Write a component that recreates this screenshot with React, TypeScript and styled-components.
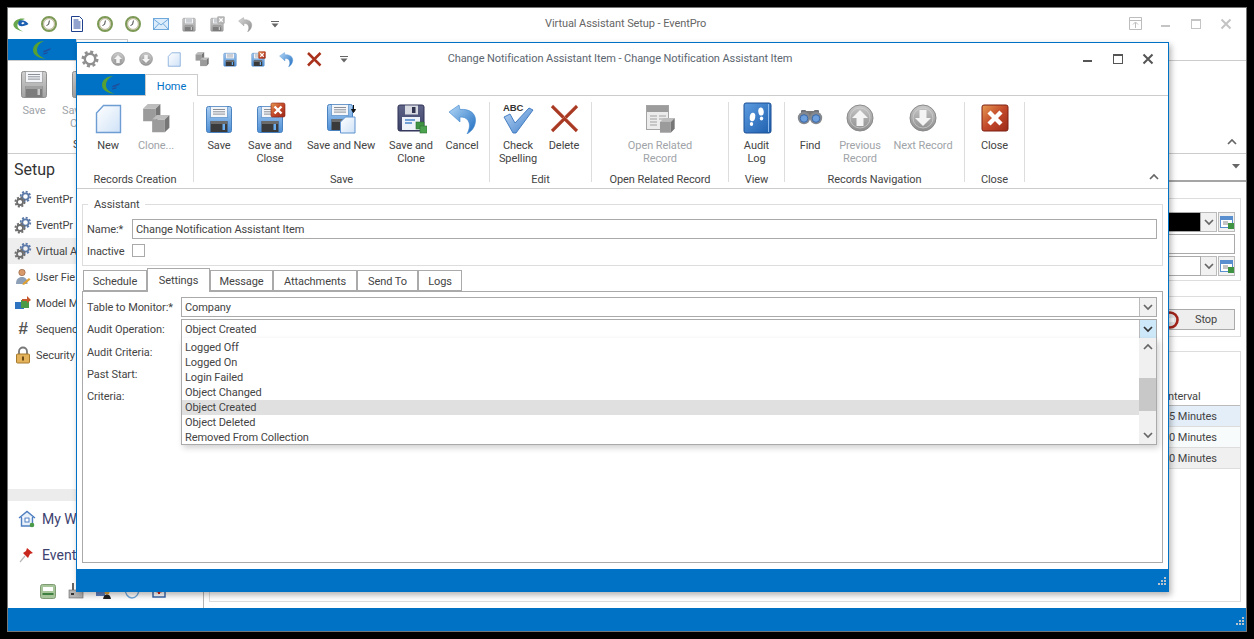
import React from 'react';
import styled, { createGlobalStyle } from 'styled-components';

const FONT = `Roboto, "Liberation Sans", sans-serif`;
const BLUE = '#0072c6';

const Global = createGlobalStyle`
  html, body { margin: 0; padding: 0; background: #000; height: 639px; overflow: hidden; }
  body { font-family: ${FONT}; font-size: 11px; letter-spacing: -0.08px; color: #444; }
  * { box-sizing: border-box; }
`;

/* ---------- icons ---------- */
const HiddenDefs = styled.svg`position: absolute; width: 0; height: 0;`;

const Defs = () => (
  <HiddenDefs aria-hidden="true">
    <defs>
      <linearGradient id="fBlue" x1="0" y1="0" x2="0" y2="1"><stop offset="0" stopColor="#a9cdf2" /><stop offset="1" stopColor="#4d8fd6" /></linearGradient>
      <linearGradient id="fGray" x1="0" y1="0" x2="0" y2="1"><stop offset="0" stopColor="#cfcfcf" /><stop offset="1" stopColor="#a2a2a2" /></linearGradient>
      <linearGradient id="fDark" x1="0" y1="0" x2="0" y2="1"><stop offset="0" stopColor="#5f6488" /><stop offset="1" stopColor="#3c4168" /></linearGradient>
      <linearGradient id="page" x1="0" y1="0" x2="1" y2="1"><stop offset="0" stopColor="#ffffff" /><stop offset="1" stopColor="#cfe2f7" /></linearGradient>
      <linearGradient id="undoB" x1="0" y1="0" x2="1" y2="1"><stop offset="0" stopColor="#b4d8f7" /><stop offset="1" stopColor="#1d6cc0" /></linearGradient>
      <linearGradient id="undoG" x1="0" y1="0" x2="1" y2="1"><stop offset="0" stopColor="#d8d8d8" /><stop offset="1" stopColor="#8c8c8c" /></linearGradient>
      <linearGradient id="ball" x1="0" y1="0" x2="0" y2="1"><stop offset="0" stopColor="#c8c8c8" /><stop offset="1" stopColor="#8d8d8d" /></linearGradient>
      <linearGradient id="book" x1="0" y1="0" x2="1" y2="1"><stop offset="0" stopColor="#5d9ce0" /><stop offset="1" stopColor="#1e5fae" /></linearGradient>
      <linearGradient id="redB" x1="0" y1="0" x2="1" y2="1"><stop offset="0" stopColor="#e79a52" /><stop offset="0.5" stopColor="#c2482a" /><stop offset="1" stopColor="#9c2a1a" /></linearGradient>
      <linearGradient id="check" x1="0" y1="0" x2="1" y2="1"><stop offset="0" stopColor="#bcd7f4" /><stop offset="1" stopColor="#3f7fcb" /></linearGradient>
    </defs>
  </HiddenDefs>
);

type IconProps = { size?: number };

const Svg: React.FC<IconProps & { children: React.ReactNode; box?: number }> = ({ size = 32, box = 32, children }) => (
  <svg width={size} height={size} viewBox={`0 0 ${box} ${box}`} aria-hidden="true">{children}</svg>
);

const FloppyBody = ({ tone }: { tone: 'blue' | 'gray' | 'dark' }) => {
  const fill = tone === 'blue' ? 'url(#fBlue)' : tone === 'gray' ? 'url(#fGray)' : 'url(#fDark)';
  const edge = tone === 'blue' ? '#4a82c0' : tone === 'gray' ? '#8f8f8f' : '#33375c';
  const slot = tone === 'blue' ? '#6aaef0' : '#c8c8c8';
  const shutter = tone === 'gray' ? '#7c7c7c' : '#3a3a3a';
  const shutterTop = tone === 'gray' ? '#a0a0a0' : '#6b6b6b';
  return (
    <>
      <rect x="3.5" y="4.5" width="25" height="26" rx="2" fill={fill} stroke={edge} />
      <rect x="7.5" y="4.5" width="17" height="11" fill="#f3f5f8" stroke={edge} strokeOpacity=".6" />
      <path d="M10 7.5h12M10 9.8h12M10 12.1h12" stroke="#8b8f96" />
      <rect x="7.5" y="19" width="17" height="11" fill={shutter} />
      <rect x="8" y="19" width="16" height="3" fill={shutterTop} />
      <rect x="19.5" y="22" width="2.5" height="6" fill={slot} />
    </>
  );
};

const Floppy = ({ size, tone = 'blue' }: IconProps & { tone?: 'blue' | 'gray' }) => (
  <Svg size={size}><FloppyBody tone={tone} /></Svg>
);

const FloppyClose = ({ size, tone = 'blue' }: IconProps & { tone?: 'blue' | 'gray' }) => (
  <Svg size={size}>
    <FloppyBody tone={tone} />
    <rect x="17" y="1" width="14" height="14" rx="1.5" fill={tone === 'blue' ? 'url(#redB)' : '#b5b5b5'} stroke={tone === 'blue' ? '#8a2416' : '#999'} strokeWidth=".6" />
    <path d="M20.5 4.5l7 7M27.5 4.5l-7 7" stroke="#fff" strokeWidth="2.4" />
  </Svg>
);

const FloppyNew = () => (
  <Svg>
    <g transform="translate(-1 -2)"><FloppyBody tone="blue" /></g>
    <path d="M20.5 15h9.500v16H15.500V20z" fill="url(#page)" stroke="#5f93cf" />
    <path d="M28.500 3v6M26.500 7.500l2 3 2-3z" stroke="#111" fill="#111" strokeWidth="1" />
  </Svg>
);

const Cube = ({ x, y, s = 1 }: { x: number; y: number; s?: number }) => (
  <g transform={`translate(${x} ${y}) scale(${s})`}>
    <path d="M5 0h11l-4 4H1z" fill="#bdbdbd" />
    <rect x="1" y="4" width="11" height="11" fill="#9b9b9b" />
    <path d="M12 4l4-4v11l-4 4z" fill="#767676" />
  </g>
);

const FloppyClone = () => (
  <Svg>
    <rect x="3" y="3" width="26" height="26" rx="2" fill="url(#fDark)" stroke="#2e3255" />
    <rect x="10" y="3.500" width="13" height="9" fill="#d8dbe2" />
    <rect x="17" y="5" width="3.500" height="6" fill="#30344f" />
    <rect x="7" y="15" width="18" height="13" fill="#eef3fa" />
    <path d="M10 18h10M10 21h7" stroke="#4a85c8" strokeWidth="1.400" />
    <rect x="21" y="20" width="8" height="7" fill="#3f9443" stroke="#2c6f30" strokeWidth=".6" />
    <rect x="25" y="24" width="7" height="7" fill="#4ca34f" stroke="#2c6f30" strokeWidth=".6" />
  </Svg>
);

const NewPage = ({ size }: IconProps) => (
  <Svg size={size}>
    <path d="M11.500 3.500h17v27h-24V11z" fill="url(#page)" stroke="#6e9dd4" strokeWidth="1.400" />
  </Svg>
);

const CloneCubes = ({ size }: IconProps) => (
  <Svg size={size}>
    <Cube x={2} y={2} s={1.15} />
    <Cube x={11} y={13} s={1.15} />
  </Svg>
);

const Undo = ({ size, tone = 'blue' }: IconProps & { tone?: 'blue' | 'gray' }) => (
  <Svg size={size}>
    <path
      d="M3 10 L13 3 L14 7.500 C23 6.500 30 11 29.500 19 C29 25 26 29 21 32 C23.500 27 24.500 22.500 22 18.500 C20 15.500 17.500 15 14 15 L14 20 Z"
      fill={tone === 'blue' ? 'url(#undoB)' : 'url(#undoG)'}
      stroke={tone === 'blue' ? '#3f86cc' : '#888'}
      strokeWidth=".6"
    />
  </Svg>
);

const RedCross = ({ size }: IconProps) => {
  const small = !!size && size < 20;
  return (
    <Svg size={size}>
      <path d="M4 4L29 29M29 4L4 29" stroke={small ? '#a8321c' : '#a83a24'} strokeWidth={small ? 5 : 3.2} />
      {!small && <path d="M5 3L29.500 27.500M28 3L3.500 27.500" stroke="#d9897a" strokeWidth=".6" />}
    </Svg>
  );
};

const AbcLabel = styled.text`
  font-family: "Liberation Sans", sans-serif;
  font-size: 9.5px;
  font-weight: 700;
  fill: #333;
`;

const CheckSpell = () => (
  <Svg>
    <AbcLabel x="1" y="9">ABC</AbcLabel>
    <path d="M2 15 L8 12 L13 21 L27 6 L31 8 L14 31 L11 31 Z" fill="url(#check)" stroke="#3a75bd" strokeWidth=".9" />
  </Svg>
);

const RelatedDoc = () => (
  <Svg>
    <rect x="2.500" y="3.500" width="22" height="24" fill="#ececec" stroke="#a5a5a5" />
    <rect x="3" y="4" width="21" height="6" fill="#9c9c9c" />
    <path d="M6 14h7M15 14h7M6 17h7M15 17h7M6 20h7M6 23h7" stroke="#a0a0a0" />
    <Cube x={15} y={16} s={.98} />
  </Svg>
);

const AuditBook = () => (
  <Svg>
    <rect x="3" y="1" width="27" height="30" rx="2" fill="url(#book)" stroke="#1a4f96" />
    <path d="M27.500 2v28" stroke="#8fbcec" />
    <ellipse cx="11.500" cy="15" rx="2.700" ry="4.200" fill="#fff" transform="rotate(10 11.500 15)" />
    <ellipse cx="10.500" cy="22" rx="1.700" ry="2" fill="#fff" />
    <ellipse cx="20" cy="9.500" rx="2.700" ry="4" fill="#fff" transform="rotate(-8 20 9.500)" />
    <ellipse cx="20.500" cy="16.500" rx="1.700" ry="2" fill="#fff" />
  </Svg>
);

const Binoculars = () => (
  <Svg>
    <rect x="11" y="9" width="10" height="5" fill="#777" />
    <rect x="7" y="8" width="5" height="4" rx="1" fill="#6f7379" />
    <rect x="20" y="8" width="5" height="4" rx="1" fill="#6f7379" />
    <circle cx="10" cy="16" r="6.200" fill="#84888f" />
    <circle cx="22" cy="16" r="6.200" fill="#84888f" />
    <circle cx="10" cy="16.500" r="3.800" fill="#6d9fdc" stroke="#3a69ab" />
    <circle cx="22" cy="16.500" r="3.800" fill="#6d9fdc" stroke="#3a69ab" />
  </Svg>
);

const ArrowBall = ({ size, down }: IconProps & { down?: boolean }) => (
  <Svg size={size}>
    <circle cx="16" cy="16" r="13" fill="url(#ball)" stroke="#8a8a8a" />
    <circle cx="16" cy="16" r="10" fill="none" stroke="#d9d9d9" strokeOpacity=".6" />
    <path
      d={down ? 'M16 24L8 16h4.500V8h7v8H24z' : 'M16 8L24 16h-4.500v8h-7v-8H8z'}
      fill="#f4f4f4"
    />
  </Svg>
);

const CloseBox = () => (
  <Svg>
    <rect x="3" y="3" width="26" height="26" rx="2" fill="url(#redB)" stroke="#7d2012" />
    <path d="M10 10l12 12M22 10L10 22" stroke="#fff" strokeWidth="4.400" />
  </Svg>
);

const ClockIcon = () => (
  <Svg size={16} box={16}>
    <circle cx="8" cy="8" r="7" fill="#f5f5f0" stroke="#7c9a55" strokeWidth="2" />
    <circle cx="8" cy="8" r="5.400" fill="#fff" stroke="#a8a078" strokeWidth=".8" />
    <path d="M8.400 4.500L7.600 8.400L5.500 9.500" stroke="#444" fill="none" />
  </Svg>
);

const DocIcon = () => (
  <Svg size={16} box={16}>
    <path d="M2.500 .5h8l3 3v12h-11z" fill="#fff" stroke="#1f3f8c" />
    <path d="M4.500 4h5M4.500 6h7M4.500 8h7M4.500 10h7M4.500 12h7" stroke="#274b9e" />
  </Svg>
);

const MailIcon = () => (
  <Svg size={16} box={16}>
    <rect x=".5" y="2.500" width="15" height="11" fill="#dcecfb" stroke="#6fa8dc" />
    <path d="M.5 3L8 9l7.500-6M.5 13.500L6 7.500M15.500 13.500L10 7.500" stroke="#6fa8dc" fill="none" />
  </Svg>
);

const LogoBlue = () => (
  <Svg size={16} box={16}>
    <path d="M12 3C7 1.500 1.500 4 .5 8c-.7 3 3 6 9.500 7.500-4-2-6-4-5.500-7C5 6 8 4 12 3z" fill="#6aa84f" />
    <path d="M15.500 8c-2-3-6-4.500-9-3.400C5 5.500 4.500 8 6 9.500c2 1.300 6.500.6 9.500-1.500zM9 6.500c1-.5 2-.3 2.500.5-.5 1-2 1.500-2.500 1-.7-.5-.7-1 0-1.500z" fill="#1c5fb0" fillRule="evenodd" />
  </Svg>
);

const TabLogo = () => (
  <Svg size={22} box={22}>
    <path d="M13 2C7 2 2 6 2 11c0 5 5 8 13 9-6-2-9-5-9-8.500C6 7 9 3.500 13 2z" fill="#57a033" />
    <path d="M12 12l8-3-1 2-6 2.500zM12 14.500l5-1.500-1 1.800-4 .7z" fill="#1f4f9c" />
  </Svg>
);

const GearQat = () => (
  <Svg size={18} box={18}>
    <circle cx="9" cy="9" r="5.200" fill="none" stroke="#8f8f8f" strokeWidth="2.400" />
    <circle cx="9" cy="9" r="7.200" fill="none" stroke="#8f8f8f" strokeWidth="2.600" strokeDasharray="3 2.650" />
  </Svg>
);

const QatDrop = () => (
  <Svg size={10} box={10}>
    <path d="M1 2.500h8" stroke="#666" />
    <path d="M1.500 4.500h7L5 8.500z" fill="#666" />
  </Svg>
);

const GearsSide = () => (
  <Svg size={18} box={18}>
    <circle cx="11.500" cy="6.500" r="3.200" fill="none" stroke="#5a78a8" strokeWidth="1.800" />
    <circle cx="11.500" cy="6.500" r="4.800" fill="none" stroke="#5a78a8" strokeWidth="1.800" strokeDasharray="2 1.700" />
    <circle cx="6" cy="12" r="3" fill="none" stroke="#6d6d6d" strokeWidth="1.800" />
    <circle cx="6" cy="12" r="4.600" fill="none" stroke="#6d6d6d" strokeWidth="1.800" strokeDasharray="2 1.600" />
  </Svg>
);

const UserIcon = () => (
  <Svg size={18} box={18}>
    <circle cx="8" cy="4.500" r="3.200" fill="#d89a6a" stroke="#8a5a3a" strokeWidth=".6" />
    <path d="M2 16c0-5 2.500-7 6-7s5.500 2 5.500 7z" fill="#8ea0b8" />
    <path d="M9 15l6-5 1.500 1.500-6 5-2 .5z" fill="#e0a030" />
  </Svg>
);

const ModelIcon = () => (
  <Svg size={18} box={18}>
    <rect x="1" y="8" width="9" height="7" fill="#2f74c0" />
    <rect x="7" y="6" width="8" height="8" fill="#4a9a48" />
    <path d="M8 5h5V2l4 4-4 3V7H8z" fill="#c65a2e" />
  </Svg>
);

const LockIcon = () => (
  <Svg size={18} box={18}>
    <path d="M5 8V5.500a4 4 0 0 1 8 0V8" fill="none" stroke="#777" strokeWidth="1.800" />
    <rect x="2.500" y="8" width="13" height="9" rx="1" fill="#e3b25a" stroke="#a67a2c" />
    <rect x="8" y="10.500" width="2" height="4" fill="#6b4a16" />
  </Svg>
);

const HouseIcon = () => (
  <Svg size={18} box={18}>
    <path d="M1 8L9 1.500 17 8M3.500 7v9h11V7" fill="#e8f0fa" stroke="#4f7fc0" strokeWidth="1.400" />
    <rect x="7" y="8" width="4" height="4" fill="#fff" stroke="#4f7fc0" />
    <circle cx="14" cy="15" r="2.300" fill="#4a9a48" />
  </Svg>
);

const PinIcon = () => (
  <Svg size={18} box={18}>
    <path d="M2 16l5-6" stroke="#b9b9b9" strokeWidth="1.200" />
    <path d="M9 2l6 5-3 1-2 4-5-5 3-2z" fill="#c8281e" />
  </Svg>
);

const BedIcon = () => (
  <Svg size={16} box={16}>
    <rect x=".5" y="1.500" width="15" height="14" rx="2" fill="#a7c59a" stroke="#7f9b72" />
    <rect x="3" y="4" width="10" height="4" fill="#fff" />
    <rect x="2.500" y="10" width="11" height="2" fill="#3f7f3f" />
  </Svg>
);

const FactoryIcon = () => (
  <Svg size={16} box={16}>
    <rect x="4" y="0" width="2" height="7" fill="#666" />
    <rect x="1" y="7" width="14" height="8" fill="#b5b5b5" stroke="#666" strokeWidth=".6" />
    <rect x="3" y="10" width="3" height="2" fill="#333" />
  </Svg>
);

const PersonChart = () => (
  <Svg size={16} box={16}>
    <rect x="0" y="6" width="9" height="7" fill="#5a7fc0" />
    <circle cx="11" cy="9" r="2.500" fill="#e0a840" />
    <path d="M7 17c0-4 2-5.500 4-5.500s4 1.500 4 5.500z" fill="#222" />
  </Svg>
);

const ChatIcon = () => (
  <Svg size={16} box={16}>
    <path d="M1 5C1 1 15 1 15 6c0 5-3 9-7 9-4 0-7-4-7-10z" fill="#fff" stroke="#6fa8dc" strokeWidth="1.300" />
  </Svg>
);

const CalIcon = () => (
  <Svg size={16} box={16}>
    <rect x="1" y="1" width="12" height="13" fill="#fff" stroke="#2f5fa8" strokeWidth="1.400" />
    <path d="M7 6v5M4.500 8.500h5" stroke="#c8281e" strokeWidth="2" />
  </Svg>
);

const TableGreen = () => (
  <Svg size={14} box={14}>
    <rect x=".5" y="1.500" width="12" height="11" fill="#fff" stroke="#5a8fcf" />
    <rect x="1" y="2" width="11" height="3" fill="#5a8fcf" />
    <path d="M3 7h5M3 9h5" stroke="#8a8a8a" />
    <rect x="8" y="8" width="6" height="6" fill="#3f9443" />
  </Svg>
);

const StopIcon = () => (
  <Svg size={18} box={18}>
    <circle cx="9" cy="9" r="7.500" fill="#e8e8e8" stroke="#a3241a" strokeWidth="2.600" />
    <rect x="5" y="7" width="8" height="4" fill="#fff" />
  </Svg>
);

const Chevron = ({ up, color = '#666' }: { up?: boolean; color?: string }) => (
  <Svg size={10} box={10}>
    <path d={up ? 'M1 7l4-4 4 4' : 'M1 3l4 4 4-4'} fill="none" stroke={color} strokeWidth="1.700" />
  </Svg>
);

const TriDown = () => (
  <Svg size={10} box={10}>
    <path d="M1 3h8L5 7.500z" fill="#666" />
  </Svg>
);

const Grip = () => (
  <Svg size={12} box={12}>
    <path d="M8 0h2v2H8zM5 3h2v2H5zM8 3h2v2H8zM2 6h2v2H2zM5 6h2v2H5zM8 6h2v2H8z" fill="#b9c4cc" />
  </Svg>
);

const BgRestoreIcon = () => (
  <Svg size={14} box={14}>
    <path d="M.5 .5h12v12H.5zM.5 3.500h12M6.500 11V5.500M4 7.500l2.500-2.500L9 7.500" fill="none" stroke="#bdbdbd" />
  </Svg>
);

const WinMin = ({ color }: { color: string }) => (
  <Svg size={12} box={12}><rect x="1" y="7" width="9" height="2" fill={color} /></Svg>
);
const WinMax = ({ color }: { color: string }) => (
  <Svg size={12} box={12}>
    <rect x="1.500" y="1.500" width="9" height="9" fill="none" stroke={color} />
    <rect x="1" y="1" width="10" height="2" fill={color} />
  </Svg>
);
const WinClose = ({ color }: { color: string }) => (
  <Svg size={12} box={12}><path d="M1.500 1.500l9 9M10.500 1.500l-9 9" stroke={color} strokeWidth="2" /></Svg>
);

/* ---------- page shell ---------- */
const Page = styled.div`
  width: 1254px;
  height: 639px;
  padding: 7px;
  background: #000;
`;

const AppWindow = styled.div`
  position: relative;
  width: 1240px;
  height: 625px;
  border: 1px solid #777;
  background: #fff;
  display: flex;
  flex-direction: column;
  overflow: hidden;
`;

const TitleBar = styled.div`
  height: 31px;
  display: flex;
  align-items: center;
  padding: 0 5px 0 0;
  flex: none;
`;

const Qat = styled.div<{ $width: number }>`
  width: ${p => p.$width}px;
  margin-left: -1px;
  display: flex;
  align-items: center;
  flex: none;
`;

const QatSlot = styled.span`
  width: 28px;
  height: 24px;
  flex: none;
  display: flex;
  align-items: center;
  justify-content: center;
`;

const QatSmall = styled(QatSlot)`
  margin-left: 2px;
`;

const AppTitle = styled.div`
  margin-left: 260px;
  color: #666;
  white-space: nowrap;
`;

const WinControls = styled.div`
  margin-left: auto;
  display: flex;
  align-items: center;
`;

const WinButton = styled.span`
  width: 30px;
  height: 24px;
  display: flex;
  align-items: center;
  justify-content: center;
`;

const AppTabs = styled.div`
  height: 22px;
  flex: none;
  display: flex;
  border-bottom: 1px solid #ccc;
`;

const BlueTab = styled.div<{ $width: number }>`
  width: ${p => p.$width}px;
  height: 100%;
  background: ${BLUE};
  display: flex;
  align-items: center;
  justify-content: center;
  flex: none;
`;

const OutlineTab = styled.div`
  width: 52px;
  border: 1px solid #ccc;
  border-bottom: 0;
`;

const AppRibbon = styled.div`
  position: relative;
  height: 93px;
  flex: none;
  display: flex;
  border-bottom: 1px solid #ccc;
  padding-top: 6px;
`;

const RibbonCollapse = styled.span<{ $right: number; $bottom: number }>`
  position: absolute;
  right: ${p => p.$right}px;
  bottom: ${p => p.$bottom}px;
  line-height: 0;
`;

const AppBody = styled.div`
  flex: 1;
  min-height: 0;
  display: flex;
`;

const Sidebar = styled.aside`
  width: 196px;
  flex: none;
  border-right: 1px solid #b5b5b5;
  display: flex;
  flex-direction: column;
`;

const SideTitle = styled.div`
  height: 32px;
  padding: 6px 0 0 6px;
  font-size: 16px;
  letter-spacing: 0;
  line-height: 20px;
  color: #333;
`;

const SideList = styled.div`
  display: flex;
  flex-direction: column;
`;

const SideRow = styled.div<{ $active?: boolean }>`
  height: 26px;
  display: flex;
  align-items: center;
  gap: 4px;
  padding-left: 6px;
  color: #444;
  white-space: nowrap;
  background: ${p => (p.$active ? '#eee' : 'transparent')};
`;

const HashGlyph = styled.span`
  width: 18px;
  text-align: center;
  font-size: 17px;
  font-weight: 700;
  font-style: italic;
  color: #555;
  font-family: "Liberation Sans", sans-serif;
`;

const SideBand = styled.div`
  height: 12px;
  margin-top: auto;
  background: #ececec;
`;

const NavRow = styled.div`
  height: 36px;
  display: flex;
  align-items: center;
  gap: 6px;
  padding-left: 10px;
  font-size: 14px;
  letter-spacing: 0;
  color: #3d4270;
  white-space: nowrap;
`;

const NavIcons = styled.div`
  height: 35px;
  padding: 10px 0 0 32px;
  display: flex;
  gap: 12px;
  align-items: flex-start;
`;

const Main = styled.main`
  flex: 1;
  min-width: 0;
  display: flex;
  flex-direction: column;
`;

const MainStrip = styled.div`
  height: 28px;
  flex: none;
  border-bottom: 2px solid #a5a5a5;
  display: flex;
  justify-content: flex-end;
  padding: 7px 5px 0 0;
`;

const MainPanels = styled.div`
  flex: 1;
  display: flex;
  flex-direction: column;
  padding: 16px 5px 6px;
`;

const PanelBox = styled.section<{ $height?: number; $gap?: number }>`
  border: 1px solid #ddd;
  flex: ${p => (p.$height ? `0 0 ${p.$height}px` : '1')};
  margin-top: ${p => p.$gap ?? 0}px;
  display: flex;
  flex-direction: column;
`;

const FieldStack = styled.div`
  margin: 13px 5px 0 auto;
  width: 320px;
  display: flex;
  flex-direction: column;
  gap: 2px;
`;

const BgFieldRow = styled.div`
  height: 20px;
  display: flex;
`;

const BgField = styled.div<{ $black?: boolean }>`
  flex: 1;
  border: 1px solid #aaa;
  background: ${p => (p.$black ? '#000' : '#fff')};
`;

const BgChevronButton = styled.div`
  width: 16px;
  border: 1px solid #bbb;
  border-left: 0;
  background: #f1f1f1;
  display: flex;
  align-items: center;
  justify-content: center;
`;

const BgIconButton = styled(BgChevronButton)`
  width: 17px;
  border-left: 1px solid #bbb;
  margin-left: 1px;
`;

const StopButton = styled.div`
  margin: 12px 5px 0 auto;
  width: 92px;
  height: 21px;
  border: 1px solid #aaa;
  background: #eee;
  display: flex;
  align-items: center;
  gap: 16px;
  padding-left: 17px;
  color: #444;
`;

const GridHead = styled.div`
  margin-top: 37px;
  height: 17px;
  border-bottom: 1px solid #bbb;
  padding-left: 955px;
  line-height: 16px;
  color: #444;
`;

const GridRow = styled.div<{ $bg: string }>`
  height: 21px;
  background: ${p => p.$bg};
  border-bottom: 1px solid #ddd;
  padding-left: 953px;
  line-height: 22px;
  color: #444;
`;

const StatusBar = styled.div<{ $height: number }>`
  height: ${p => p.$height}px;
  flex: none;
  background: ${BLUE};
  display: flex;
  align-items: flex-end;
  justify-content: flex-end;
  padding: 0 0 2px 0;
`;

/* ---------- dialog ---------- */
const Dialog = styled.div`
  position: absolute;
  left: 68px;
  top: 34px;
  width: 1093px;
  height: 550px;
  background: #fff;
  border: 1px solid ${BLUE};
  border-top-width: 1.5px;
  box-shadow: 2px 3px 6px rgba(0, 0, 0, .3);
  display: flex;
  flex-direction: column;
`;

const DialogBar = styled.div`
  height: 31px;
  flex: none;
  display: grid;
  grid-template-columns: 1fr auto 1fr;
  align-items: center;
  padding-right: 5px;
`;

const DialogTitle = styled.div`
  color: #5c6670;
  white-space: nowrap;
`;

const DialogTabs = styled.div`
  height: 22px;
  flex: none;
  display: flex;
  border-bottom: 1px solid #ccc;
`;

const HomeTab = styled.div`
  width: 53px;
  height: 22px;
  flex: none;
  border: 1px solid #ccc;
  border-bottom: 0;
  background: #fff;
  color: ${BLUE};
  display: flex;
  align-items: center;
  justify-content: center;
  padding-top: 2px;
`;

const Ribbon = styled.div`
  position: relative;
  height: 93px;
  flex: none;
  display: flex;
  padding-top: 6px;
  border-bottom: 1px solid #ccc;
`;

const RibbonGroup = styled.div<{ $width: number; $plain?: boolean }>`
  width: ${p => p.$width}px;
  height: 80px;
  flex: none;
  border-right: ${p => (p.$plain ? '0' : '1px solid #ddd')};
  display: flex;
  flex-direction: column;
`;

const GroupButtons = styled.div<{ $pad: number }>`
  height: 71px;
  flex: none;
  display: flex;
  padding-left: ${p => p.$pad}px;
`;

const GroupLabel = styled.div<{ $indent?: number }>`
  height: 14px;
  line-height: 14px;
  flex: none;
  text-align: ${p => (p.$indent ? 'left' : 'center')};
  padding-left: ${p => p.$indent ?? 0}px;
  color: #444;
  white-space: nowrap;
`;

const RibbonButton = styled.div<{ $width: number; $off?: boolean }>`
  width: ${p => p.$width}px;
  flex: none;
  display: flex;
  flex-direction: column;
  align-items: center;
  color: ${p => (p.$off ? '#a0a4a8' : '#444')};
`;

const RibbonIcon = styled.span`
  height: 32px;
  margin-bottom: 5px;
  line-height: 0;
`;

const RibbonText = styled.span`
  line-height: 13px;
  text-align: center;
  white-space: pre-line;
`;

const CoveredText = styled.span`
  align-self: flex-start;
  padding-left: 7px;
  line-height: 13px;
  white-space: pre;
`;

const DialogBody = styled.div`
  flex: 1;
  min-height: 0;
  padding: 8px 5px 6px;
  display: flex;
  flex-direction: column;
`;

const GroupBox = styled.fieldset`
  margin: 0;
  padding: 8px 5px 8px 4px;
  border: 1px solid #ddd;
  height: 69px;
  flex: none;
  min-width: 0;
`;

const GroupLegend = styled.legend`
  margin-left: 1px;
  padding: 0 6px;
  line-height: 16px;
  height: 14px;
  color: #444;
`;

const NameRow = styled.div`
  height: 20px;
  display: flex;
  align-items: center;
`;

const NameLabel = styled.label`
  width: 45px;
  flex: none;
`;

const TextInput = styled.input`
  flex: 1;
  height: 20px;
  min-width: 0;
  border: 1px solid #aaa;
  padding: 0 3px;
  font: 11px ${FONT};
  letter-spacing: -0.08px;
  color: #444;
  outline: none;
`;

const InactiveRow = styled.div`
  height: 13px;
  margin-top: 5px;
  display: flex;
  align-items: center;
`;

const InactiveLabel = styled(NameLabel)`
  padding-top: 1px;
`;

const CheckBox = styled.span`
  width: 13px;
  height: 13px;
  border: 1px solid #aaa;
  flex: none;
`;

const TabRow = styled.div`
  margin-top: 2px;
  padding-left: 1px;
  height: 23px;
  flex: none;
  display: flex;
  align-items: flex-end;
`;

const Tab = styled.div<{ $width: number; $active?: boolean }>`
  position: relative;
  width: ${p => p.$width}px;
  height: ${p => (p.$active ? 24 : 21)}px;
  margin-bottom: ${p => (p.$active ? -1 : 0)}px;
  border: 1px solid #aaa;
  border-bottom: ${p => (p.$active ? '0' : '1px solid #aaa')};
  background: #fff;
  z-index: ${p => (p.$active ? 1 : 0)};
  display: flex;
  align-items: center;
  justify-content: center;
  flex: none;
  color: #444;
  padding-top: ${p => (p.$active ? 0 : 2)}px;
`;

const TabPanel = styled.div`
  position: relative;
  flex: 1;
  min-height: 0;
  border: 1px solid #aaa;
  padding: 5px 5px 0 4px;
`;

const FormRow = styled.div`
  height: 20px;
  margin-bottom: 2px;
  display: flex;
  align-items: center;
`;

const FormLabel = styled.div`
  width: 94px;
  flex: none;
  white-space: nowrap;
`;

const LabelRow = styled.div`
  height: 22px;
  display: flex;
  align-items: center;
`;

const Combo = styled.div`
  flex: 1;
  height: 20px;
  border: 1px solid #aaa;
  display: flex;
  align-items: center;
  min-width: 0;
`;

const ComboText = styled.div`
  flex: 1;
  padding-left: 3px;
  color: #444;
`;

const ComboButton = styled.div<{ $open?: boolean }>`
  width: 17px;
  height: 100%;
  border-left: 1px solid #bbb;
  background: ${p => (p.$open ? '#cde8f8' : '#f1f1f1')};
  display: flex;
  align-items: center;
  justify-content: center;
`;

const DropList = styled.div`
  position: absolute;
  left: 98px;
  top: 46px;
  width: 976px;
  height: 107px;
  background: #fff;
  border: 1px solid #aaa;
  border-top: 0;
  box-shadow: 2px 3px 6px rgba(0, 0, 0, .18);
  display: flex;
  z-index: 2;
`;

const DropItems = styled.div`
  flex: 1;
  padding-top: 2px;
  display: flex;
  flex-direction: column;
`;

const DropItem = styled.div<{ $selected?: boolean }>`
  height: 15px;
  line-height: 15px;
  padding-left: 3px;
  color: #444;
  background: ${p => (p.$selected ? '#e0e0e0' : 'transparent')};
`;

const ScrollBar = styled.div`
  width: 17px;
  flex: none;
  background: #f0f0f0;
  display: flex;
  flex-direction: column;
  align-items: center;
`;

const ScrollButton = styled.span`
  height: 18px;
  display: flex;
  align-items: center;
`;

const ScrollThumb = styled.div`
  width: 100%;
  height: 33px;
  margin: 22px 0 auto;
  background: #c8c8c8;
`;

/* ---------- data ---------- */
type Btn = { w: number; label: string; icon: React.ReactNode; off?: boolean };
type Grp = { w: number; pad: number; label: string; buttons: Btn[] };

const groups: Grp[] = [
  { w: 117, pad: 8, label: 'Records Creation', buttons: [
    { w: 46, label: 'New', icon: <NewPage /> },
    { w: 50, label: 'Clone...', icon: <CloneCubes />, off: true },
  ] },
  { w: 296, pad: 4, label: 'Save', buttons: [
    { w: 42, label: 'Save', icon: <Floppy /> },
    { w: 60, label: 'Save and\nClose', icon: <FloppyClose /> },
    { w: 82, label: 'Save and New', icon: <FloppyNew /> },
    { w: 58, label: 'Save and\nClone', icon: <FloppyClone /> },
    { w: 44, label: 'Cancel', icon: <Undo /> },
  ] },
  { w: 102, pad: 5, label: 'Edit', buttons: [
    { w: 46, label: 'Check\nSpelling', icon: <CheckSpell /> },
    { w: 46, label: 'Delete', icon: <RedCross /> },
  ] },
  { w: 137, pad: 0, label: 'Open Related Record', buttons: [
    { w: 136, label: 'Open Related\nRecord', icon: <RelatedDoc />, off: true },
  ] },
  { w: 56, pad: 0, label: 'View', buttons: [
    { w: 55, label: 'Audit\nLog', icon: <AuditBook /> },
  ] },
  { w: 180, pad: 5, label: 'Records Navigation', buttons: [
    { w: 40, label: 'Find', icon: <Binoculars /> },
    { w: 60, label: 'Previous\nRecord', icon: <ArrowBall />, off: true },
    { w: 66, label: 'Next Record', icon: <ArrowBall down />, off: true },
  ] },
  { w: 60, pad: 0, label: 'Close', buttons: [
    { w: 59, label: 'Close', icon: <CloseBox /> },
  ] },
];

const sideRows = [
  { icon: <GearsSide />, label: 'EventPr' },
  { icon: <GearsSide />, label: 'EventPr' },
  { icon: <GearsSide />, label: 'Virtual A', active: true },
  { icon: <UserIcon />, label: 'User Fie' },
  { icon: <ModelIcon />, label: 'Model M' },
  { icon: <HashGlyph>#</HashGlyph>, label: 'Sequenc' },
  { icon: <LockIcon />, label: 'Security' },
];

const tabs = [
  { w: 64, label: 'Schedule' },
  { w: 63, label: 'Settings', active: true },
  { w: 63, label: 'Message' },
  { w: 84, label: 'Attachments' },
  { w: 61, label: 'Send To' },
  { w: 44, label: 'Logs' },
];

const items = ['Logged Off', 'Logged On', 'Login Failed', 'Object Changed', 'Object Created', 'Object Deleted', 'Removed From Collection'];

const dialogQat: React.ReactNode[] = [
  <GearQat />, <ArrowBall size={16} />, <ArrowBall size={16} down />, <NewPage size={16} />,
  <CloneCubes size={16} />, <Floppy size={16} />, <FloppyClose size={16} />, <Undo size={16} />, <RedCross size={16} />,
];

const appQat: React.ReactNode[] = [
  <LogoBlue />, <ClockIcon />, <DocIcon />, <ClockIcon />, <ClockIcon />, <MailIcon />,
  <Floppy size={16} tone="gray" />, <FloppyClose size={16} tone="gray" />, <Undo size={16} tone="gray" />,
];

export default function App() {
  return (
    <Page>
      <Global />
      <Defs />
      <AppWindow>
        <TitleBar>
          <Qat $width={278}>
            {appQat.map((icon, i) => <QatSlot key={i}>{icon}</QatSlot>)}
            <QatSmall><QatDrop /></QatSmall>
          </Qat>
          <AppTitle>Virtual Assistant Setup - EventPro</AppTitle>
          <WinControls>
            <WinButton><BgRestoreIcon /></WinButton>
            <WinButton><WinMin color="#c4c4c4" /></WinButton>
            <WinButton><WinMax color="#c4c4c4" /></WinButton>
            <WinButton><WinClose color="#c4c4c4" /></WinButton>
          </WinControls>
        </TitleBar>
        <AppTabs>
          <BlueTab $width={68}><TabLogo /></BlueTab>
          <OutlineTab />
        </AppTabs>
        <AppRibbon>
          <RibbonGroup $width={154} $plain>
            <GroupButtons $pad={5}>
              <RibbonButton $width={42} $off><RibbonIcon><Floppy tone="gray" /></RibbonIcon><RibbonText>Save</RibbonText></RibbonButton>
              <RibbonButton $width={60} $off><RibbonIcon><FloppyClose tone="gray" /></RibbonIcon><CoveredText>{'Sav\n   C'}</CoveredText></RibbonButton>
            </GroupButtons>
            <GroupLabel $indent={65}>S</GroupLabel>
          </RibbonGroup>
          <RibbonCollapse $right={9} $bottom={6}><Chevron up /></RibbonCollapse>
        </AppRibbon>
        <AppBody>
          <Sidebar>
            <SideTitle>Setup</SideTitle>
            <SideList>
              {sideRows.map((r, i) => (
                <SideRow key={i} $active={r.active}>{r.icon}<span>{r.label}</span></SideRow>
              ))}
            </SideList>
            <SideBand />
            <NavRow><HouseIcon /><span>My W</span></NavRow>
            <NavRow><PinIcon /><span>Event</span></NavRow>
            <NavIcons>
              <BedIcon /><FactoryIcon /><PersonChart /><ChatIcon /><CalIcon /><TriDown />
            </NavIcons>
          </Sidebar>
          <Main>
            <MainStrip><TriDown /></MainStrip>
            <MainPanels>
              <PanelBox $height={83}>
                <FieldStack>
                  <BgFieldRow><BgField $black /><BgChevronButton><Chevron /></BgChevronButton><BgIconButton><TableGreen /></BgIconButton></BgFieldRow>
                  <BgFieldRow><BgField /></BgFieldRow>
                  <BgFieldRow><BgField /><BgChevronButton><Chevron /></BgChevronButton><BgIconButton><TableGreen /></BgIconButton></BgFieldRow>
                </FieldStack>
              </PanelBox>
              <PanelBox $height={41} $gap={15}>
                <StopButton><StopIcon /><span>Stop</span></StopButton>
              </PanelBox>
              <PanelBox $gap={14}>
                <GridHead>Interval</GridHead>
                <GridRow $bg="#e3eef9">15 Minutes</GridRow>
                <GridRow $bg="#f8fbfb">30 Minutes</GridRow>
                <GridRow $bg="#f0f0f0">30 Minutes</GridRow>
              </PanelBox>
            </MainPanels>
          </Main>
        </AppBody>
        <StatusBar $height={23}><Grip /></StatusBar>

        <Dialog>
          <DialogBar>
            <Qat $width={290}>
              {dialogQat.map((icon, i) => <QatSlot key={i}>{icon}</QatSlot>)}
              <QatSmall><QatDrop /></QatSmall>
            </Qat>
            <DialogTitle>Change Notification Assistant Item - Change Notification Assistant Item</DialogTitle>
            <WinControls>
              <WinButton><WinMin color="#555" /></WinButton>
              <WinButton><WinMax color="#555" /></WinButton>
              <WinButton><WinClose color="#555" /></WinButton>
            </WinControls>
          </DialogBar>
          <DialogTabs>
            <BlueTab $width={68}><TabLogo /></BlueTab>
            <HomeTab>Home</HomeTab>
          </DialogTabs>
          <Ribbon>
            {groups.map(g => (
              <RibbonGroup key={g.label} $width={g.w}>
                <GroupButtons $pad={g.pad}>
                  {g.buttons.map(b => (
                    <RibbonButton key={b.label} $width={b.w} $off={b.off}>
                      <RibbonIcon>{b.icon}</RibbonIcon>
                      <RibbonText>{b.label}</RibbonText>
                    </RibbonButton>
                  ))}
                </GroupButtons>
                <GroupLabel>{g.label}</GroupLabel>
              </RibbonGroup>
            ))}
            <RibbonCollapse $right={9} $bottom={6}><Chevron up /></RibbonCollapse>
          </Ribbon>
          <DialogBody>
            <GroupBox>
              <GroupLegend>Assistant</GroupLegend>
              <NameRow>
                <NameLabel>Name:*</NameLabel>
                <TextInput readOnly value="Change Notification Assistant Item" />
              </NameRow>
              <InactiveRow>
                <InactiveLabel>Inactive</InactiveLabel>
                <CheckBox />
              </InactiveRow>
            </GroupBox>
            <TabRow>
              {tabs.map(t => <Tab key={t.label} $width={t.w} $active={t.active}>{t.label}</Tab>)}
            </TabRow>
            <TabPanel>
              <FormRow>
                <FormLabel>Table to Monitor:*</FormLabel>
                <Combo><ComboText>Company</ComboText><ComboButton><Chevron /></ComboButton></Combo>
              </FormRow>
              <FormRow>
                <FormLabel>Audit Operation:</FormLabel>
                <Combo><ComboText>Object Created</ComboText><ComboButton $open><Chevron color="#333" /></ComboButton></Combo>
              </FormRow>
              <LabelRow>Audit Criteria:</LabelRow>
              <LabelRow>Past Start:</LabelRow>
              <LabelRow>Criteria:</LabelRow>
              <DropList>
                <DropItems>
                  {items.map(it => <DropItem key={it} $selected={it === 'Object Created'}>{it}</DropItem>)}
                </DropItems>
                <ScrollBar>
                  <ScrollButton><Chevron up /></ScrollButton>
                  <ScrollThumb />
                  <ScrollButton><Chevron /></ScrollButton>
                </ScrollBar>
              </DropList>
            </TabPanel>
          </DialogBody>
          <StatusBar $height={22}><Grip /></StatusBar>
        </Dialog>
      </AppWindow>
    </Page>
  );
}
